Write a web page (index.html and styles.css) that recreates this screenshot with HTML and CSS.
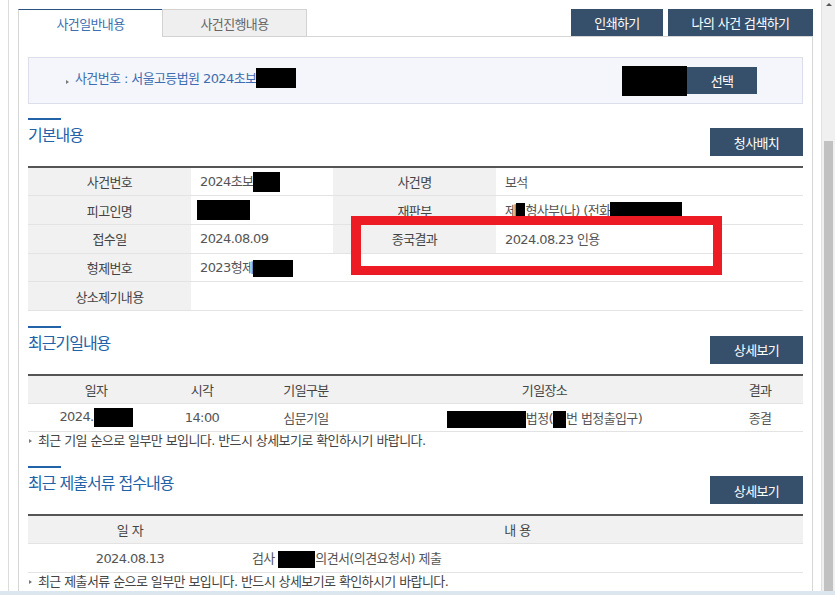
FILE: index.html
```html
<!DOCTYPE html>
<html lang="ko">

<head>
  <meta charset="UTF-8">
  <meta name="viewport" content="width=device-width, initial-scale=1.0">
  <title>사건일반내용</title>
  <link rel="stylesheet" href="styles.css">
</head>

<body>
  <div class="frame">
    <div class="main">
      <div class="tabbar">
        <div class="tab tab-on">사건일반내용</div>
        <div class="tab tab-off">사건진행내용</div>
        <div class="tab-rest">
          <button class="btn btn-top btn-print">인쇄하기</button>
          <button class="btn btn-top btn-search">나의 사건 검색하기</button>
        </div>
      </div>

      <div class="panel">
        <div class="case">
          <div class="case-no"><span class="bullet"></span>사건번호 : 서울고등법원 2024초보<span class="mask m-case"></span></div>
          <div class="case-pick">
            <span class="mask m-select"></span>
            <button class="btn btn-pick">선택</button>
          </div>
        </div>

        <!-- 기본내용 -->
        <div class="sec sec-basic">
          <div class="sec-head">
            <h2 class="sec-title">기본내용</h2>
            <button class="btn btn-sec">청사배치</button>
          </div>
          <table class="grid grid-basic">
            <colgroup>
              <col class="c-163">
              <col class="c-142">
              <col class="c-163">
              <col>
            </colgroup>
            <tr>
              <th>사건번호</th>
              <td>2024초보<span class="mask m-27"></span></td>
              <th>사건명</th>
              <td>보석</td>
            </tr>
            <tr>
              <th>피고인명</th>
              <td class="td-tight"><span class="mask m-53"></span></td>
              <th>재판부</th>
              <td>제<span class="mask m-9"></span>형사부(나) (전화<span class="mask m-72"></span></td>
            </tr>
            <tr>
              <th>접수일</th>
              <td>2024.08.09</td>
              <th>종국결과</th>
              <td>2024.08.23 인용</td>
            </tr>
            <tr>
              <th>형제번호</th>
              <td colspan="3">2023형제<span class="mask m-40"></span></td>
            </tr>
            <tr>
              <th>상소제기내용</th>
              <td colspan="3"></td>
            </tr>
          </table>
          <div class="mark"></div>
        </div>

        <!-- 최근기일내용 -->
        <div class="sec sec-date">
          <div class="sec-head">
            <h2 class="sec-title">최근기일내용</h2>
            <button class="btn btn-sec">상세보기</button>
          </div>
          <table class="grid grid-center">
            <colgroup>
              <col class="c-136">
              <col class="c-76">
              <col class="c-132">
              <col>
              <col class="c-86">
            </colgroup>
            <tr>
              <th>일자</th>
              <th>시각</th>
              <th>기일구분</th>
              <th>기일장소</th>
              <th>결과</th>
            </tr>
            <tr>
              <td>2024.<span class="mask m-39"></span></td>
              <td>14:00</td>
              <td>심문기일</td>
              <td><span class="mask m-79"></span>법정(<span class="mask m-13"></span>번 법정출입구)</td>
              <td>종결</td>
            </tr>
          </table>
          <p class="note">최근 기일 순으로 일부만 보입니다. 반드시 상세보기로 확인하시기 바랍니다.</p>
        </div>

        <!-- 최근 제출서류 접수내용 -->
        <div class="sec sec-doc">
          <div class="sec-head">
            <h2 class="sec-title">최근 제출서류 접수내용</h2>
            <button class="btn btn-sec">상세보기</button>
          </div>
          <table class="grid grid-center">
            <colgroup>
              <col class="c-204">
              <col>
            </colgroup>
            <tr>
              <th>일 자</th>
              <th>내 용</th>
            </tr>
            <tr>
              <td>2024.08.13</td>
              <td class="td-left">검사 <span class="mask m-37"></span>의견서(의견요청서) 제출</td>
            </tr>
          </table>
          <p class="note">최근 제출서류 순으로 일부만 보입니다. 반드시 상세보기로 확인하시기 바랍니다.</p>
        </div>
      </div>
    </div>

    <div class="scroll">
      <span class="scroll-up"></span>
      <span class="scroll-thumb"></span>
    </div>
  </div>
  <div class="band"></div>
</body>

</html>
```

FILE: styles.css
```css
:root {
  --btn-color: #36506b;
  --title-color: #2263a8;
  --line-color: #d6d6d6;
  --th-bg: #f1f1f1;
}

* {
  box-sizing: border-box;
}

html,
body {
  margin: 0;
  height: 100%;
}

body {
  font-family: "DejaVu Sans", "Noto Sans CJK KR", sans-serif;
  font-size: 13px;
  letter-spacing: -0.6px;
  color: #555;
  background: #fff;
  overflow: hidden;
}

.frame {
  display: flex;
  height: 591px;
}

.main {
  flex: 1;
  min-width: 0;
  margin-left: 8px;
  border-left: 1px solid #dcdcdc;
  padding: 0 8px 0 9px;
  overflow: hidden;
}

/* scrollbar */
.scroll {
  width: 14px;
  background: #f0f0f0;
  border-left: 1px solid #e0e0e0;
  display: flex;
  flex-direction: column;
  align-items: center;
}

.scroll-up {
  margin-top: 3px;
  width: 0;
  height: 0;
  border-left: 3px solid transparent;
  border-right: 3px solid transparent;
  border-bottom: 3px solid #555;
}

.scroll-thumb {
  margin-top: 135px;
  width: 9px;
  flex: 1;
  background: #c1c1c1;
}

.band {
  height: 4px;
  background: #dce6ef;
}

/* tabs */
.tabbar {
  display: flex;
  padding-top: 9px;
}

.tab {
  height: 28px;
  display: flex;
  align-items: center;
  justify-content: center;
}

.tab-on {
  width: 144px;
  border-top: 1px solid #2c5282;
  border-left: 1px solid var(--line-color);
  color: #3d6fb1;
  background: #fff;
}

.tab-off {
  width: 145px;
  background: #efefef;
  border: 1px solid #d2d2d2;
  color: #666;
}

.tab-rest {
  flex: 1;
  display: flex;
  justify-content: flex-end;
  align-items: flex-start;
  gap: 5px;
  border-bottom: 1px solid var(--line-color);
}

/* buttons */
.btn {
  font-family: inherit;
  font-size: 13px;
  letter-spacing: -0.6px;
  color: #fff;
  background: var(--btn-color);
  border: none;
  border-radius: 0;
  height: 28px;
  padding: 0;
  cursor: pointer;
}

.btn-top {
  height: 27px;
}

.btn-print {
  width: 92px;
}

.btn-search {
  width: 145px;
}

.btn-pick {
  width: 70px;
  height: 27px;
}

.btn-sec {
  width: 93px;
  align-self: flex-end;
}

/* panel */
.panel {
  height: calc(100% - 37px);
  border-left: 1px solid var(--line-color);
  border-right: 1px solid var(--line-color);
  padding: 20px 9px 0;
}

.case {
  display: flex;
  justify-content: space-between;
  align-items: flex-start;
  height: 47px;
  padding: 9px 45px 0 37px;
  background: #f5f6fb;
  border: 1px solid #dcdfe9;
}

.case-no {
  display: flex;
  align-items: center;
  margin-top: 1px;
  line-height: 17px;
  color: #3d6db0;
}

.case-pick {
  display: flex;
  align-items: flex-start;
}

.bullet,
.note::before {
  display: inline-block;
  width: 0;
  height: 0;
  border-top: 2px solid transparent;
  border-bottom: 2px solid transparent;
  border-left: 3px solid #777;
  margin: 7px 6px 0 0;
}

.note::before {
  content: "";
  margin: 7px 6px 0 1px;
}

/* sections */
.sec {
  position: relative;
  margin-top: 14px;
}

.sec-date {
  margin-top: 15px;
}

.sec-doc {
  margin-top: 17px;
}

.sec-head {
  display: flex;
  justify-content: space-between;
  height: 38px;
}

.sec-title {
  margin: 0;
  font-size: 16px;
  font-weight: normal;
  letter-spacing: -1px;
  line-height: 20px;
  color: var(--title-color);
}

.sec-title::before {
  content: "";
  display: block;
  width: 33px;
  height: 2px;
  margin-bottom: 6px;
  background: var(--title-color);
}

/* tables */
.grid {
  width: 100%;
  margin-top: 10px;
  border-collapse: collapse;
  table-layout: fixed;
  border-top: 2px solid #555;
}

.grid th,
.grid td {
  height: 28.5px;
  padding: 0 9px;
  border-bottom: 1px solid #e3e3e3;
  font-weight: normal;
  white-space: nowrap;
  overflow: hidden;
}

.grid-basic th,
.grid-basic td {
  height: 28.7px;
}

.grid th {
  background: var(--th-bg);
  color: #444;
  text-align: center;
}

.grid td {
  text-align: left;
}

.grid-center td {
  text-align: center;
}

.grid-center .td-left {
  text-align: left;
  padding-left: 20px;
}

.grid .td-tight {
  padding-left: 6px;
}

.c-163 { width: 163px; }
.c-142 { width: 142px; }
.c-136 { width: 136px; }
.c-76 { width: 76px; }
.c-132 { width: 132px; }
.c-86 { width: 86px; }
.c-204 { width: 204px; }

.note {
  display: flex;
  align-items: flex-start;
  margin: 0;
  line-height: 17px;
  color: #444;
}

/* redactions */
.mask {
  display: inline-block;
  height: 19px;
  vertical-align: middle;
  background: #000;
}

.m-case { width: 40px; height: 20px; }
.m-select { width: 65px; height: 30px; margin-top: -1px; }
.m-27 { width: 27px; height: 20px; }
.m-53 { width: 53px; height: 20px; }
.m-9 { width: 9px; height: 16px; }
.m-72 { width: 72px; height: 18px; }
.m-40 { width: 40px; height: 17px; }
.m-39 { width: 39px; }
.m-79 { width: 79px; height: 17px; }
.m-13 { width: 13px; height: 17px; }
.m-37 { width: 37px; height: 17px; }

/* red annotation box */
.mark {
  position: absolute;
  left: 323px;
  top: 98px;
  width: 371px;
  height: 59px;
  border: 9px solid #ed1c24;
  border-left-width: 10px;
}
```
